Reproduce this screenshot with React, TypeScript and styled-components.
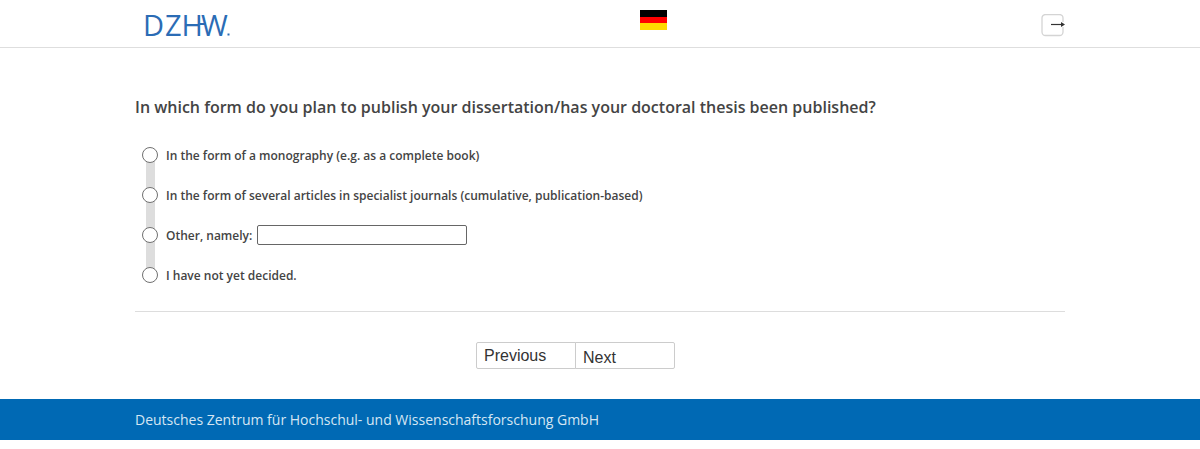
import * as React from 'react';
import styled, { createGlobalStyle } from 'styled-components';

const GlobalStyle = createGlobalStyle`
  html, body {
    margin: 0;
    padding: 0;
    background: #fff;
    font-family: "Open Sans", "Liberation Sans", sans-serif;
    color: #444;
  }
`;

const Header = styled.header`
  height: 47px;
  border-bottom: 1px solid #dedede;
`;

const HeaderInner = styled.div`
  width: 930px;
  height: 47px;
  margin: 0 auto;
  display: grid;
  grid-template-columns: 505px 27px 1fr;
`;

const LogoBox = styled.div`
  padding: 11px 0 0 10px;
`;

const FlagBox = styled.div`
  display: flex;
  flex-direction: column;
  width: 27px;
  height: 20px;
  margin-top: 10px;
`;

const FlagStripe = styled.span<{ $color: string }>`
  flex: 1;
  background: ${(props) => props.$color};
`;

const ExitBox = styled.div`
  justify-self: end;
  padding: 14px 0 0 0;
`;

const Main = styled.main`
  width: 930px;
  margin: 0 auto;
  height: 351px;
`;

const Question = styled.h1`
  margin: 0;
  padding-top: 48px;
  font-size: 16px;
  line-height: 22px;
  font-weight: 600;
  color: #444;
`;

const OptionList = styled.div`
  margin-top: 17px;
  padding-left: 7px;
  padding-bottom: 16px;
  border-bottom: 1px solid #ddd;
  display: flex;
  flex-direction: column;
`;

const OptionRow = styled.label`
  position: relative;
  height: 40px;
  display: flex;
  align-items: center;
  font-size: 12px;
  font-weight: 600;
  color: #444;

  &:not(:last-child)::before {
    content: '';
    position: absolute;
    left: 4px;
    top: 20px;
    width: 9px;
    height: 40px;
    background: #ddd;
  }
`;

const RadioCircle = styled.span`
  position: relative;
  box-sizing: border-box;
  width: 16px;
  height: 16px;
  border: 1px solid #707070;
  border-radius: 50%;
  background: #fff;
  margin-right: 8px;
  flex: none;
`;

const OtherInput = styled.input`
  box-sizing: border-box;
  width: 210px;
  height: 20px;
  margin-left: 5px;
  border: 1px solid #666;
  border-radius: 2px;
  background: #fff;
  padding: 0 4px;
`;

const ButtonRow = styled.div`
  display: flex;
  justify-content: center;
  margin-top: 30px;
  padding-right: 49px;
`;

const NavButton = styled.button<{ $first?: boolean }>`
  box-sizing: border-box;
  width: 100px;
  height: 27px;
  margin-left: ${(props) => (props.$first ? '0' : '-1px')};
  border: 1px solid #ccc;
  border-radius: ${(props) => (props.$first ? '2px 0 0 2px' : '0 2px 2px 0')};
  background: #fff;
  font-family: "Liberation Sans", Arial, sans-serif;
  font-size: 16px;
  color: #333;
  text-align: left;
  padding: ${(props) => (props.$first ? '0 0 0 7px' : '4px 0 0 7px')};
`;

const Footer = styled.footer`
  height: 41px;
  background: #0069b4;
`;

const FooterInner = styled.div`
  width: 930px;
  margin: 0 auto;
  font-size: 14px;
  line-height: 41px;
  color: #d5e6f3;
`;

const LogoText = styled.text`
  font-family: "Open Sans", "Liberation Sans", sans-serif;
  font-weight: 400;
  font-size: 29px;
  fill: #2b6cb5;
`;

const options = [
  'In the form of a monography (e.g. as a complete book)',
  'In the form of several articles in specialist journals (cumulative, publication-based)',
];

const App = () => (
  <>
    <GlobalStyle />
    <Header>
      <HeaderInner>
        <LogoBox>
          <svg width="100" height="30" viewBox="0 0 100 30">
            <LogoText x="-2 20 36.5 56" y="24.5">
              DZHW
            </LogoText>
            <path d="M55 13h6" stroke="#2b6cb5" strokeWidth="2" />
            <rect x="82.5" y="22.5" width="2" height="2" fill="#2b6cb5" />
          </svg>
        </LogoBox>
        <FlagBox>
          <FlagStripe $color="#000" />
          <FlagStripe $color="#f00" />
          <FlagStripe $color="#ffd800" />
        </FlagBox>
        <ExitBox>
          <svg width="24" height="24" viewBox="0 0 24 24">
            <rect x="1" y="0.5" width="21" height="21" rx="3.5" fill="none" stroke="#d4d4d4" strokeWidth="1.3" />
            <rect x="19" y="8" width="4" height="5" fill="#fff" />
            <path d="M10 10.5h11" stroke="#333" strokeWidth="1.2" />
            <path d="M24 10.5l-4-2.5v5z" fill="#333" />
          </svg>
        </ExitBox>
      </HeaderInner>
    </Header>
    <Main>
      <Question>In which form do you plan to publish your dissertation/has your doctoral thesis been published?</Question>
      <OptionList>
        {options.map((text) => (
          <OptionRow key={text}>
            <RadioCircle />
            {text}
          </OptionRow>
        ))}
        <OptionRow>
          <RadioCircle />
          Other, namely:
          <OtherInput type="text" />
        </OptionRow>
        <OptionRow>
          <RadioCircle />
          I have not yet decided.
        </OptionRow>
      </OptionList>
      <ButtonRow>
        <NavButton $first>Previous</NavButton>
        <NavButton>Next</NavButton>
      </ButtonRow>
    </Main>
    <Footer>
      <FooterInner>Deutsches Zentrum für Hochschul- und Wissenschaftsforschung GmbH</FooterInner>
    </Footer>
  </>
);

export default App;
